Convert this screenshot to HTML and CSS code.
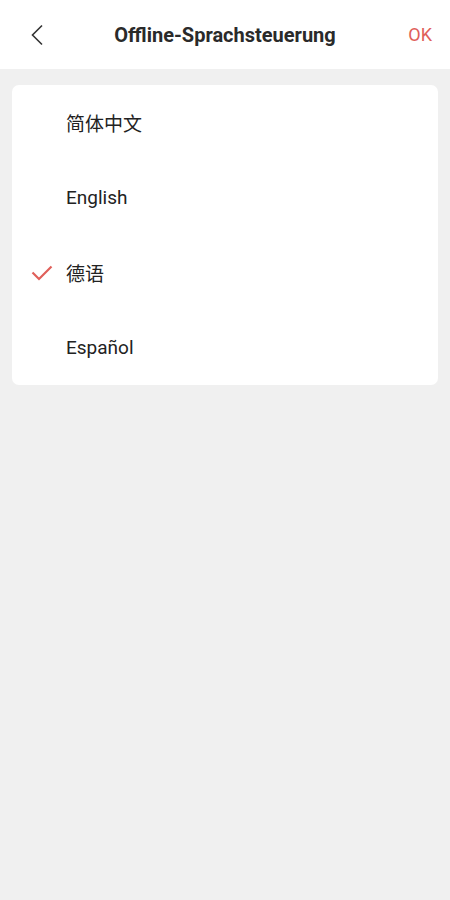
FILE: index.html
```html
<!DOCTYPE html>
<html>
<head lang="de">
    <meta charset="UTF-8">
    <title>Offline-Sprachsteuerung</title>
    <link rel="stylesheet" href="styles.css">
</head>
<body>
<div class="header">
    <a class="back" href="#">
        <svg width="14" height="22" viewBox="0 0 14 22"><path d="M12 1.5L2.5 11L12 20.5" fill="none" stroke="#333" stroke-width="1.6"/></svg>
    </a>
    <div class="title">Offline-Sprachsteuerung</div>
    <a class="ok" href="#">OK</a>
</div>
<ul class="langs">
    <li><span class="check"></span><span class="name">简体中文</span></li>
    <li><span class="check"></span><span class="name">English</span></li>
    <li class="on"><span class="check"><svg width="22" height="16" viewBox="0 0 22 16"><path d="M1.5 7.5L8 14L20.5 1.5" fill="none" stroke="#e0605a" stroke-width="2.2"/></svg></span><span class="name">德语</span></li>
    <li><span class="check"></span><span class="name">Español</span></li>
</ul>
</body>
</html>
```
FILE: styles.css
```css
*{padding:0;margin:0;}
body{background:#f0f0f0;font-family:Roboto,"Noto Sans CJK SC",sans-serif;color:#222;}
a{text-decoration:none;}
.header{height:69px;background:#fff;display:grid;grid-template-columns:70px 1fr 70px;align-items:center;padding:0 18px 0 30px;}
.back{display:flex;}
.title{font-size:20px;font-weight:bold;color:#2a2a2a;text-align:center;margin-left:-12px;}
.ok{text-align:right;font-size:18px;color:#e0605a;}
.langs{list-style:none;background:#fff;margin:16px 12px 0;border-radius:7px;}
.langs li{height:75px;display:flex;align-items:center;}
.check{width:54px;display:flex;justify-content:flex-end;}
.check svg{margin-right:13px;margin-top:1px;}
.name{font-size:19px;color:#222;}
```
